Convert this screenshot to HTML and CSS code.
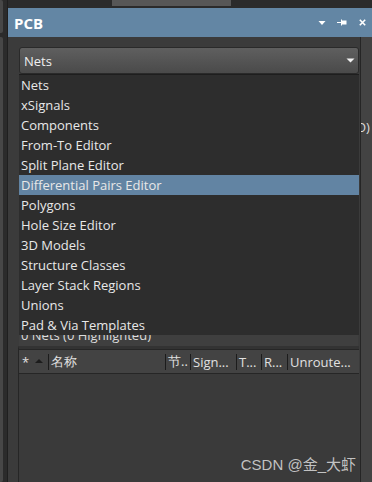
FILE: index.html
```html
<!DOCTYPE html>
<html>
<head>
<meta charset="utf-8">
<link rel="stylesheet" href="styles.css">
</head>
<body>
<div class="app">
  <div class="gutter"><div class="gtab gtab1"></div><div class="gtab gtab2"></div></div>
  <div class="main">
    <div class="topstrip"><div class="toptab"></div></div>
    <div class="header">
      <span class="title">PCB</span>
      <div class="hicons">
        <svg class="ic-menu" width="8" height="6" viewBox="0 0 8 6"><path d="M0.5 1 L7.5 1 L4 5 Z" fill="#fff"/></svg>
        <svg class="ic-pin" width="10" height="7" viewBox="0 0 10 7"><path d="M0 3.5 H4" stroke="#fff" stroke-width="1"/><path d="M4.5 0.5 V6.5" stroke="#fff" stroke-width="1"/><rect x="4.5" y="1.5" width="5" height="4" fill="#fff"/></svg>
        <svg class="ic-close" width="7" height="7" viewBox="0 0 7 7"><path d="M0.8 0.8 L6.2 6.2 M6.2 0.8 L0.8 6.2" stroke="#fff" stroke-width="1.6"/></svg>
      </div>
    </div>
    <div class="content">
      <div class="panel">
        <div class="select">
          <span class="select-text">Nets</span>
          <svg width="9" height="5" viewBox="0 0 9 5"><path d="M0.5 0.5 L8.5 0.5 L4.5 4.5 Z" fill="#f2f2f2"/></svg>
        </div>
        <div class="filters"></div>
        <div class="status">0 Nets (0 Highlighted)</div>
        <div class="table">
          <div class="thead">
            <div class="th th-star"><span class="star">*</span><svg class="sort" width="8" height="4" viewBox="0 0 8 4"><path d="M0 4 L8 4 L4 0 Z" fill="#1c1c1c"/></svg></div>
            <span class="sep"></span>
            <div class="th w-name">名称</div>
            <span class="sep"></span>
            <div class="th w-node">节..</div>
            <span class="sep"></span>
            <div class="th w-sig">Sign...</div>
            <span class="sep"></span>
            <div class="th w-t">T...</div>
            <span class="sep"></span>
            <div class="th w-r">R...</div>
            <span class="sep"></span>
            <div class="th w-un">Unroute...</div>
          </div>
          <div class="tbody"></div>
        </div>
        <ul class="popup">
          <li>Nets</li>
          <li>xSignals</li>
          <li>Components</li>
          <li>From-To Editor</li>
          <li>Split Plane Editor</li>
          <li class="sel">Differential Pairs Editor</li>
          <li>Polygons</li>
          <li>Hole Size Editor</li>
          <li>3D Models</li>
          <li>Structure Classes</li>
          <li>Layer Stack Regions</li>
          <li>Unions</li>
          <li>Pad &amp; Via Templates</li>
        </ul>
        <div class="watermark">CSDN @金_大虾</div>
      </div>
      <div class="rightcol"><span class="peek">O)</span></div>
    </div>
  </div>
</div>
</body>
</html>
```

FILE: styles.css
```css
html, body {
  margin: 0;
  padding: 0;
}
body {
  width: 372px;
  height: 482px;
  overflow: hidden;
  background: #2b2b2b;
  font-family: "Open Sans", "Noto Sans", sans-serif;
  font-size: 13px;
  color: #e6e6e6;
}
.app {
  display: flex;
  height: 482px;
}
.gutter {
  width: 7px;
  border-right: 1px solid #1f1f1f;
  background: #2b2b2b;
  display: flex;
  flex-direction: column;
  gap: 4px;
}
.gtab {
  width: 3px;
  background: #474747;
  border-radius: 0 2px 2px 0;
}
.gtab1 { height: 33px; }
.gtab2 { flex: 1; }
.main {
  flex: 1;
  display: flex;
  flex-direction: column;
  min-width: 0;
}
.topstrip {
  height: 8px;
  background: #2b2b2b;
}
.toptab {
  margin-left: 104px;
  width: 119px;
  height: 6px;
  background: #575757;
}
.header {
  height: 29px;
  background: #6386a4;
  display: flex;
  align-items: center;
  padding: 0 6px;
}
.title {
  font-weight: 700;
  font-size: 15px;
  color: #fff;
  padding-top: 1px;
}
.hicons {
  margin-left: auto;
  display: flex;
  align-items: center;
}
.ic-menu { margin-right: 11px; }
.ic-pin { margin-right: 12px; }
.content {
  flex: 1;
  display: flex;
  min-height: 0;
}
.panel {
  position: relative;
  box-sizing: border-box;
  width: 353px;
  border-right: 1px solid #252525;
  background: #3b3b3b;
  padding: 10px 1px 0 11px;
  display: flex;
  flex-direction: column;
}
.rightcol {
  flex: 1;
  background: #434343;
  overflow: hidden;
}
.peek {
  display: block;
  margin-top: 81px;
  margin-left: -5px;
  color: #dcdcdc;
  white-space: nowrap;
}
.select {
  box-sizing: border-box;
  height: 27px;
  border: 1px solid #2a2a2a;
  border-radius: 3px;
  background: linear-gradient(#5f5f5f, #4a4a4a);
  display: flex;
  align-items: center;
  justify-content: space-between;
  padding: 0 3px 0 4px;
}
.select-text {
  color: #efefef;
}
.filters {
  height: 253px;
}
.status {
  height: 19px;
  line-height: 17px;
  background: #3f3f3f;
  padding-left: 2px;
  margin-right: 1px;
  color: #dcdcdc;
  white-space: nowrap;
  overflow: hidden;
}
.table {
  flex: 1;
  display: flex;
  flex-direction: column;
  margin-left: -1px;
  border-left: 1px solid #262626;
  border-top: 3px solid #333;
}
.thead {
  height: 23px;
  border-top: 1px solid #262626;
  border-bottom: 1px solid #262626;
  background: #434343;
  display: flex;
  align-items: center;
  white-space: nowrap;
}
.th {
  box-sizing: border-box;
  padding-left: 2px;
  color: #e0e0e0;
  overflow: hidden;
}
.th-star {
  width: 29px;
  display: flex;
  align-items: center;
  padding-left: 3px;
}
.star { width: 13px; }
.sort { margin-top: -1px; }
.sep {
  width: 1px;
  height: 16px;
  background: #1c1c1c;
}
.w-name { width: 116px; }
.w-node { width: 24px; }
.w-sig { width: 45px; }
.w-t { width: 24px; }
.w-r { width: 25px; }
.w-un { flex: 1; }
.tbody {
  flex: 1;
  background: #3a3a3a;
}
.popup {
  position: absolute;
  left: 11px;
  top: 37px;
  width: 340px;
  margin: 0;
  padding: 0;
  list-style: none;
  border-top: 1px solid #1e1e1e;
  background: #2d2d2d;
}
.popup li {
  height: 20px;
  line-height: 20px;
  padding-left: 2px;
  color: #e8e8e8;
  white-space: nowrap;
}
.popup li.sel {
  background: #6284a3;
}
.watermark {
  position: absolute;
  right: 4px;
  bottom: 8px;
  line-height: 18px;
  font-family: "Liberation Sans", "Noto Sans CJK SC", sans-serif;
  font-size: 15px;
  color: rgba(220, 220, 220, 0.85);
  white-space: nowrap;
}
```
